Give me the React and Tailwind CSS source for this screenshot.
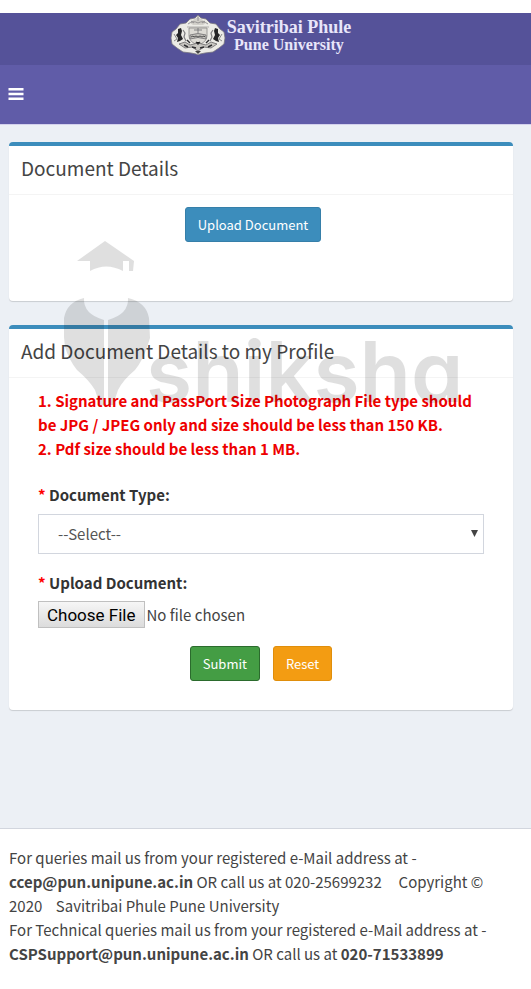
// App.jsx - student document upload page
import { useState } from 'react';

// University crest shown in the top bar
function Crest() {
  return (
    <svg viewBox="0 0 56 40" className="w-14 h-10 shrink-0" aria-hidden="true">
      <path
        d="M28 0l3 3 5 1 4 4 6 1 4 5 4 3 1 6-1 6-5 4-6 4-8 1-5 1-2 1-2-1-5-1-8-1-6-4-5-4-1-6 1-6 4-3 4-5 6-1 4-4 5-1z"
        fill="#ecebe6"
        stroke="#77757f"
        strokeWidth="0.8"
      />
      {/* crown */}
      <path d="M20 8l3-3 5-3 5 3 3 3-3 2H23z" fill="#d2d0ca" />
      <path d="M18 9q5-4 10-1 5-3 10 1M21 6l3 2M35 6l-3 2M28 1v5" fill="none" stroke="#8d8b8c" strokeWidth="0.9" />
      <path d="M17 12h22M19 14h18" stroke="#b0aeac" strokeWidth="1" />
      {/* shield */}
      <path d="M19 13h18v8q0 6-9 9-9-3-9-9z" fill="#dddbd5" stroke="#8a8886" strokeWidth="0.8" />
      <path d="M28 13v5M24 15h8M20 20q8-3 16 0v4q-8-3-16 0z" fill="#c4c2bd" stroke="#6d6c6e" strokeWidth="0.8" />
      <path d="M21 22l2-1 1 1 2-1 2 1 2-1 2 1 2-1 1 1" fill="none" stroke="#444" strokeWidth="0.9" />
      {/* supporters */}
      <path d="M8 14l3-1 1 3-1 4 2 4-3 2-3 1 1-4-2-3 2-2zM48 14l-3-1-1 3 1 4-2 4 3 2 3 1-1-4 2-3-2-2z" fill="#252527" />
      <path d="M13 15l2 3-1 4 2 4M43 15l-2 3 1 4-2 4" fill="none" stroke="#7f7e80" strokeWidth="1.2" />
      <path d="M4 19l3 5-3 2M52 19l-3 5 3 2" fill="none" stroke="#888" strokeWidth="1" />
      {/* scroll */}
      <path d="M9 29l6-2 5 3 8-2 8 2 5-3 6 2-6 4-7-1-6 4-6-4-7 1z" fill="#c8c6c1" stroke="#69686a" strokeWidth="0.8" />
      <path d="M14 30l4 2M42 30l-4 2M22 32l4 1M34 32l-4 1M26 27l2 2 2-2M17 25l3 3M39 25l-3 3" stroke="#2e2e30" strokeWidth="1.4" />
      <path d="M25 36l3 3 3-3" fill="#444" />
    </svg>
  );
}

// Grey brand mark lying over both boxes
function Watermark() {
  return (
    <div
      className="absolute left-16 top-29 flex items-end opacity-12 pointer-events-none text-black"
      aria-hidden="true"
    >
      <svg viewBox="0 0 86 164" className="h-41 w-[86px] shrink-0" fill="currentColor">
        <path d="M13 20L41 0l29 20-1 10h-4V20h-6v10q-17-9-33 0V20z" />
        <path d="M20 57q-1 16 20 22v85h-4l-5-15q-6-10-18-20Q5 119 1 106L0 96V77q3-16 20-20z" />
        <path d="M64 57q1 16-20 22v85h5l5-15q5-10 17-20 8-10 12-23l3-9-1-20q-3-16-21-20z" />
      </svg>
      <span className="-ml-1 font-['Inter'] text-[84px] leading-[66px] font-semibold [font-feature-settings:'cv11']">
        shiksha
      </span>
    </div>
  );
}

function Box({ title, children }) {
  return (
    <section className="rounded-sm border-t-4 border-[#3c8dbc] bg-white shadow-[0_1px_1px_rgba(0,0,0,0.15)]">
      <h3 className="border-b border-[#f4f4f4] px-3 pb-[14px] pt-[10px] text-[19px] leading-6 text-[#444]">{title}</h3>
      {children}
    </section>
  );
}

function App() {
  const [docType, setDocType] = useState('');

  return (
    <div className="bg-white pt-[13px] font-['Noto_Sans_CJK_SC',sans-serif] text-[15px] leading-6 text-[#333]">
      <header>
        <div className="flex h-13 items-start justify-center bg-[#555299] pr-[10px] pt-[2px]">
          <Crest />
          <div className="pl-px pt-1 text-center font-['Liberation_Serif',serif] text-[18px] font-bold leading-[17px] text-[#e9e6fa]">
            <div>Savitribai Phule</div>
            <div className="text-[16px]">Pune University</div>
          </div>
        </div>
        <nav className="flex h-15 items-center border-b border-[#d3d1ec] bg-[#605ca8] px-2 pb-[2px]">
          <button type="button" aria-label="Toggle navigation" className="text-white">
            <svg viewBox="0 0 15 12" className="h-3 w-4" fill="currentColor">
              <path d="M0 0h15v2.4H0zM0 4.8h15v2.4H0zM0 9.6h15V12H0z" />
            </svg>
          </button>
        </nav>
      </header>

      <main className="relative bg-[#ecf0f5] pb-[118px] pl-[9px] pr-[18px] pt-[17px]">
        <Box title="Document Details">
          <div className="pb-[59px] pr-4 pt-3 text-center">
            <button
              type="button"
              className="h-[35px] rounded-[3px] border border-[#367fa9] bg-[#3c8dbc] px-3 text-[13px] text-white"
            >
              Upload Document
            </button>
          </div>
        </Box>

        <div className="h-6" />

        <Box title="Add Document Details to my Profile">
          <form className="px-[29px] pb-[29px] pt-[11px]" onSubmit={(e) => e.preventDefault()}>
            <p className="font-bold text-[#e00]">
              1. Signature and PassPort Size Photograph File type should be JPG / JPEG only and size should be less
              than 150 KB.
              <br />
              2. Pdf size should be less than 1 MB.
            </p>

            <label htmlFor="docType" className="mt-[22px] block font-bold">
              <span className="text-[#f00]">*</span> Document Type:
            </label>
            <div className="relative mt-[7px]">
              <select
                id="docType"
                value={docType}
                onChange={(e) => setDocType(e.target.value)}
                className="h-10 w-full appearance-none border border-[#d2d6de] bg-white px-[19px] text-[#555]"
              >
                <option value="">--Select--</option>
                <option value="photo">Photograph</option>
                <option value="sign">Signature</option>
              </select>
              <svg viewBox="0 0 7 7" className="pointer-events-none absolute right-[6px] top-4 size-[7px]" fill="#444">
                <path d="M0 0h7L3.500 7z" />
              </svg>
            </div>

            <label htmlFor="docFile" className="mt-[17px] block font-bold">
              <span className="text-[#f00]">*</span> Upload Document:
            </label>
            <input
              id="docFile"
              type="file"
              className="mt-[6px] block w-full text-[#444] file:mr-[2px] file:h-[27px] file:border file:border-solid file:border-[#c0c0c0] file:bg-linear-to-b file:from-[#f6f6f6] file:to-[#dcdcdc] file:px-2 file:font-['Roboto'] file:text-[17px] file:text-black"
            />

            <div className="mt-[18px] flex justify-center gap-[13px] text-[13px] text-white">
              <button type="submit" className="h-[35px] rounded-[3px] border border-[#2b6b2d] bg-[#449d44] px-3">
                Submit
              </button>
              <button
                type="reset"
                onClick={() => setDocType('')}
                className="h-[35px] rounded-[3px] border border-[#e08e0b] bg-[#f39c12] px-3"
              >
                Reset
              </button>
            </div>
          </form>
        </Box>

        <Watermark />
      </main>

      <footer className="border-t border-[#d2d6de] bg-white pb-6 pl-[9px] pr-9 pt-[17px] text-[#444]">
        For queries mail us from your registered e-Mail address at - <b>ccep@pun.unipune.ac.in</b> OR call us at
        020-25699232 &nbsp;&nbsp;&nbsp; Copyright © 2020 &nbsp;&nbsp; Savitribai Phule Pune University
        <br />
        For Technical queries mail us from your registered e-Mail address at - <b>CSPSupport@pun.unipune.ac.in</b> OR
        call us at <b>020-71533899</b>
      </footer>
    </div>
  );
}

export default App;
